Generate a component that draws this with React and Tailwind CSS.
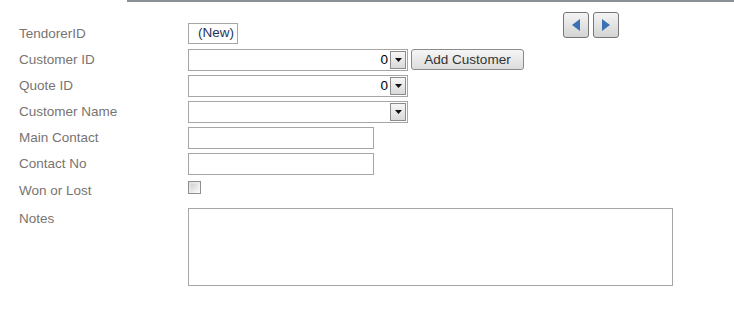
import React from "react";

const font = { fontFamily: '"Liberation Sans", Arial, sans-serif' };

function DropButton() {
  return (
    <div className="flex h-[18px] w-[16px] items-center justify-center border border-[#8c8c8c] bg-gradient-to-b from-[#f7f7f7] to-[#d9d9d9]">
      <svg width="9" height="6" viewBox="0 0 9 6">
        <polygon points="1,1 8,1 4.5,5" fill="#111" />
      </svg>
    </div>
  );
}

function Combo({ value }) {
  return (
    <div className="flex h-[22px] w-[220px] items-center justify-end border border-[#a6a6a6] bg-white pr-px">
      <span className="pr-[2px] text-[13.5px] leading-none text-black">{value}</span>
      <DropButton />
    </div>
  );
}

function TextBox({ className }) {
  return <div className={"h-[22px] border border-[#a6a6a6] bg-white " + className} />;
}

function NavButton({ dir }) {
  return (
    <button className="flex h-[26px] w-[26px] items-center justify-center rounded-[3px] border border-[#767676] bg-gradient-to-b from-[#f4f4f4] to-[#d4d4d4]">
      <svg width="10" height="14" viewBox="0 0 10 14">
        {dir === "left" ? (
          <polygon points="9,1 9,13 1,7" fill="#3b72b6" />
        ) : (
          <polygon points="1,1 1,13 9,7" fill="#3b72b6" />
        )}
      </svg>
    </button>
  );
}

function Row({ label, h, children }) {
  return (
    <div className="flex items-start" style={{ height: h }}>
      <div className="w-[188px] pl-[19px] pt-px text-[13.5px] leading-[20px] text-[#787472]">{label}</div>
      {children}
    </div>
  );
}

export default function App() {
  return (
    <div className="relative h-[326px] w-[734px] bg-white" style={font}>
      <div className="ml-[127px] h-[2px] bg-[#8b9095]" />

      {/* record navigation */}
      <div className="absolute left-[563px] top-[12px] flex gap-[4px]">
        <NavButton dir="left" />
        <NavButton dir="right" />
      </div>

      <div className="pt-[21px]">
        <Row label="TendorerID" h={26}>
          <div className="flex h-[21px] w-[50px] items-center border border-[#a6a6a6] pl-[9px] text-[13.5px] text-[#22365e]">
            (New)
          </div>
        </Row>
        <Row label="Customer ID" h={26}>
          <Combo value="0" />
          <button className="ml-[3px] h-[21px] w-[113px] rounded-[3px] border border-[#8a8a8a] bg-gradient-to-b from-[#f6f6f6] to-[#dcdcdc] text-[13.5px] leading-none text-[#333]">
            Add Customer
          </button>
        </Row>
        <Row label="Quote ID" h={26}>
          <Combo value="0" />
        </Row>
        <Row label="Customer Name" h={26}>
          <Combo value="" />
        </Row>
        <Row label="Main Contact" h={26}>
          <TextBox className="w-[186px]" />
        </Row>
        <Row label="Contact No" h={27}>
          <TextBox className="w-[186px]" />
        </Row>
        <Row label="Won or Lost" h={28}>
          <div className="mt-px h-[13px] w-[13px] border border-[#8f8f8f] bg-gradient-to-br from-[#dcdcdc] to-[#fbfbfb] p-[2px]">
            <div className="h-full w-full bg-gradient-to-br from-[#d2d2d2] to-[#f4f4f4]" />
          </div>
        </Row>
        <Row label="Notes" h={78}>
          <div className="h-[78px] w-[485px] border border-[#a6a6a6] bg-white" />
        </Row>
      </div>
    </div>
  );
}
